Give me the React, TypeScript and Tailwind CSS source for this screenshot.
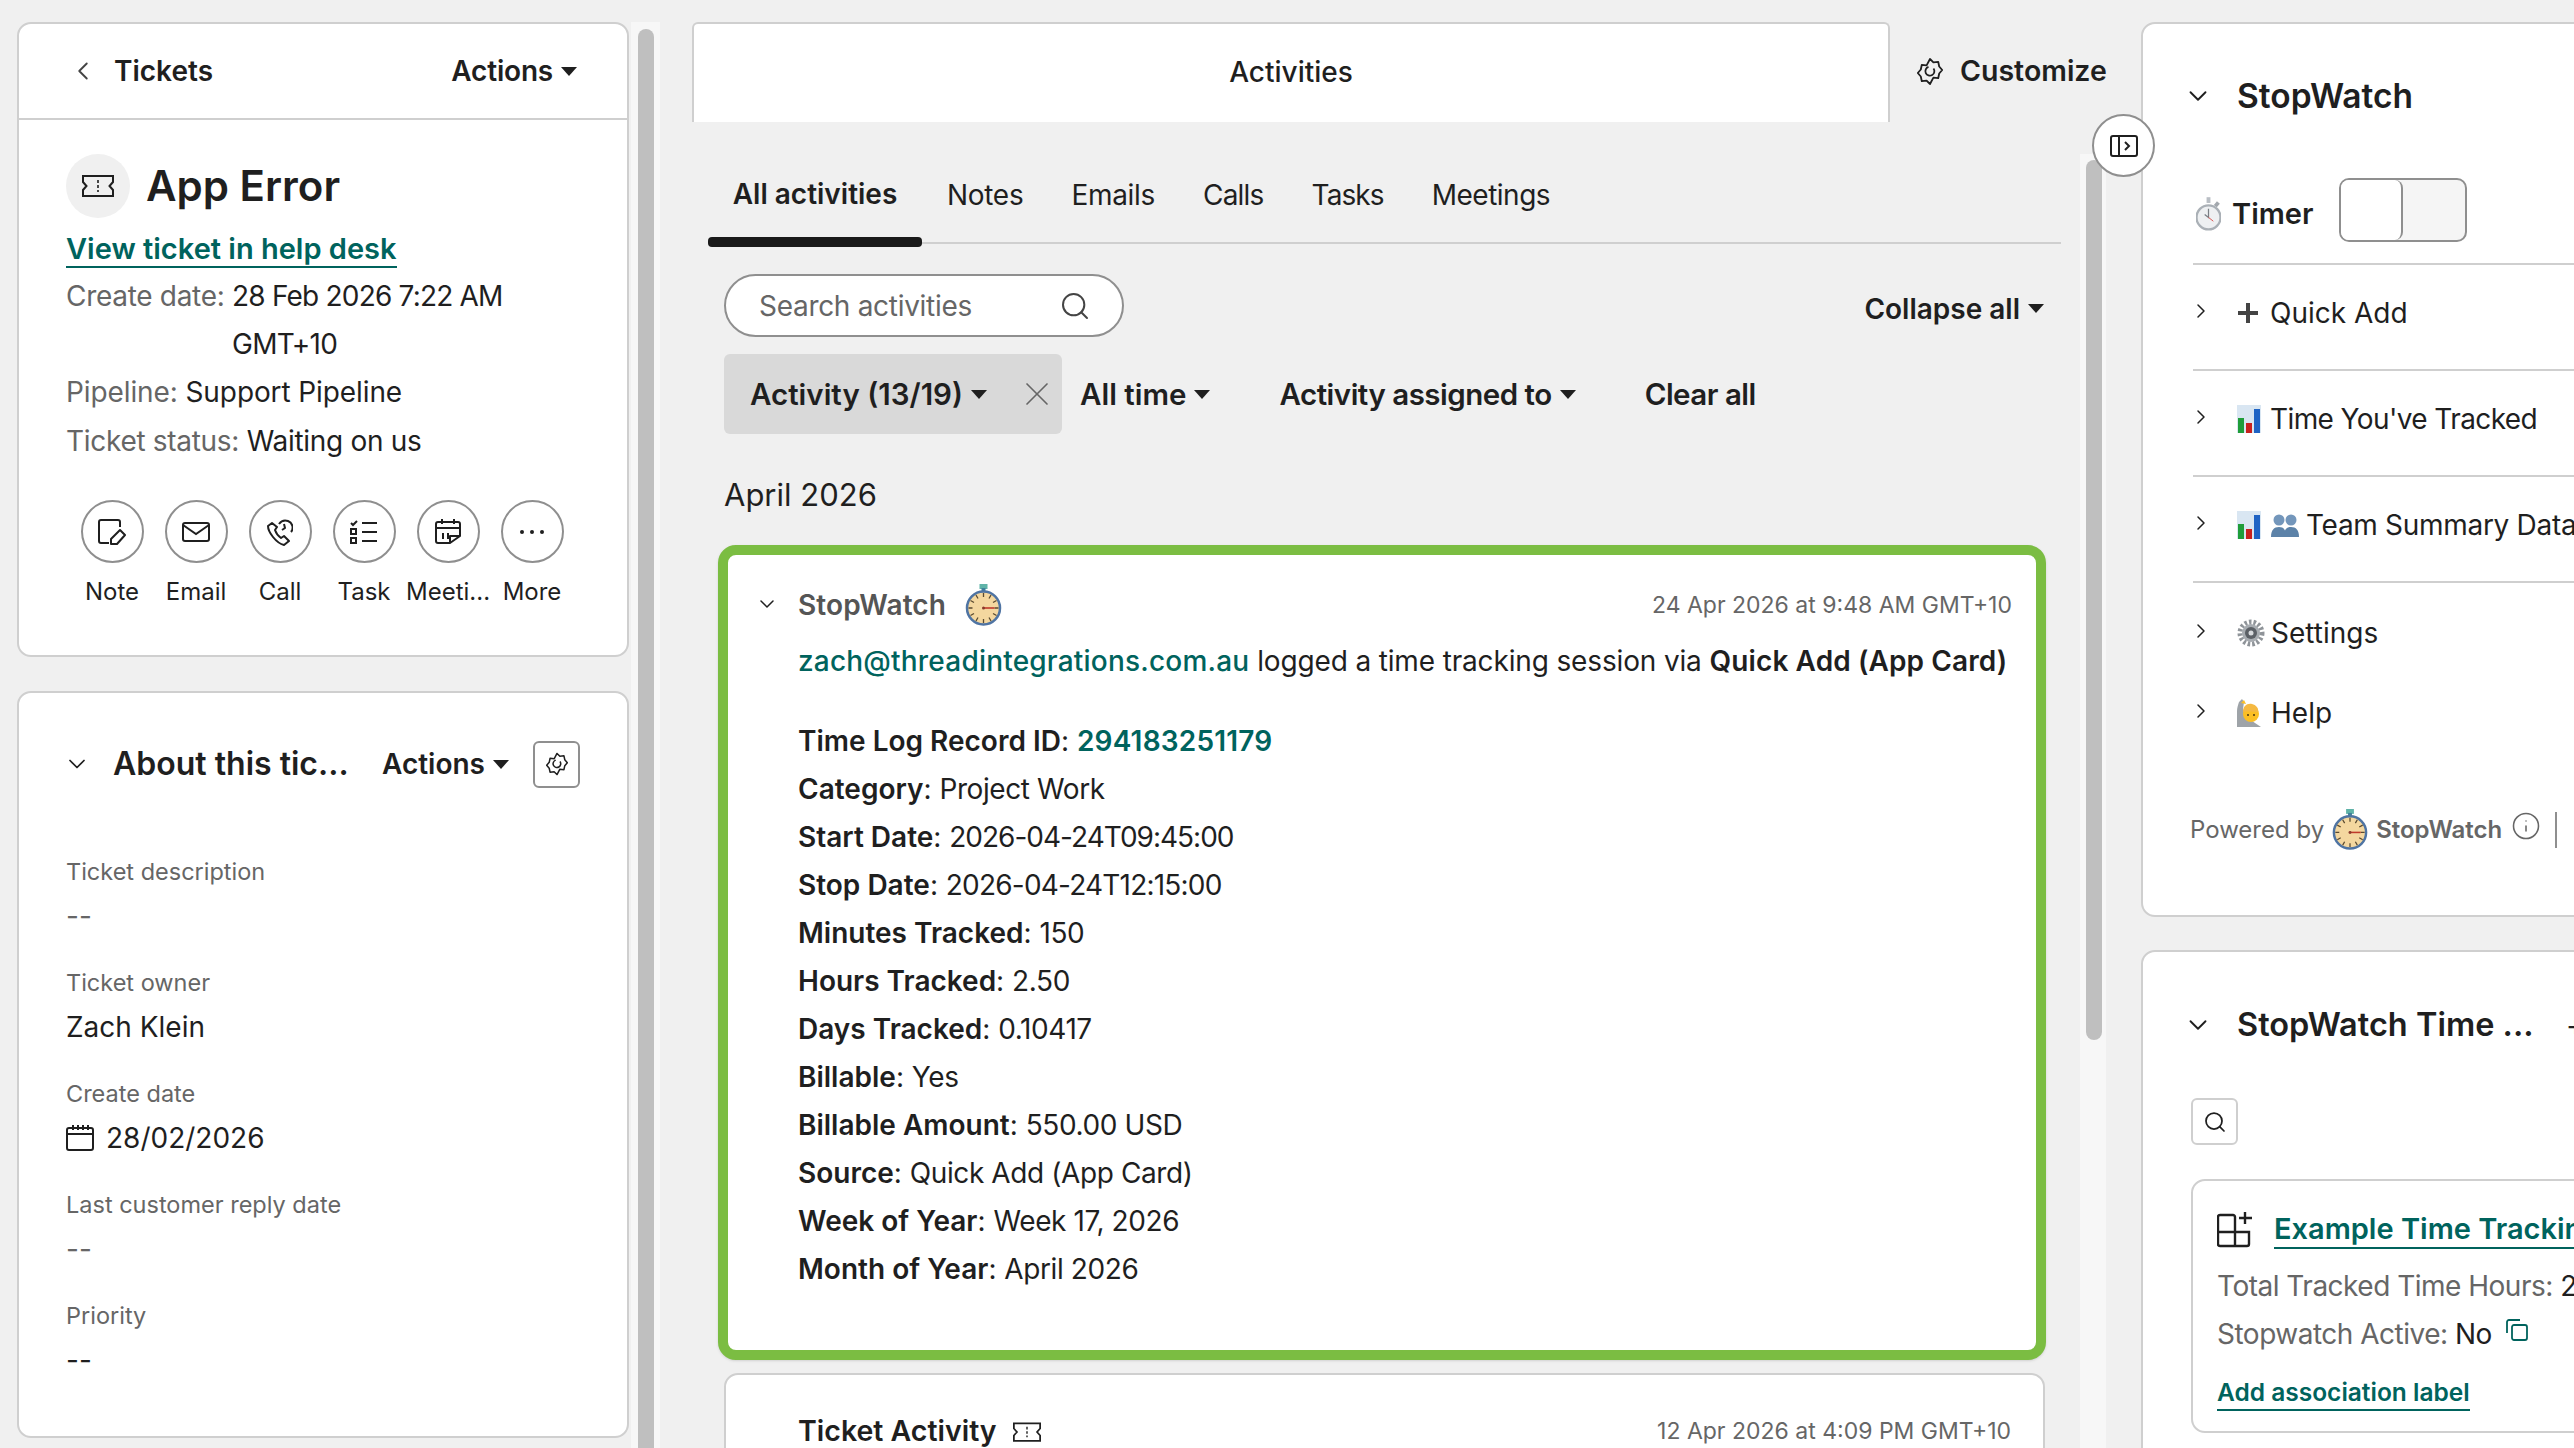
import { ChevronDown, ChevronLeft, ChevronRight, Search, X, Info } from 'lucide-react';

const Caret = () => (
  <svg viewBox="0 0 16 9" className="ml-[8px] h-[9px] w-[16px] shrink-0 fill-current">
    <path d="M0 0h16L8 9z" />
  </svg>
);

const TicketIcon = ({ className }: { className: string }) => (
  <svg viewBox="0 0 32 22" className={className} fill="none" stroke="currentColor" strokeWidth="2">
    <path d="M1 1h30v6l-3.5 4 3.500 4v6H1v-6l3.500-4L1 7z" />
    <path d="M16 5v3M16 10v3M16 15v2" strokeWidth="1.6" />
  </svg>
);

const GearIcon = ({ className }: { className: string }) => (
  <svg viewBox="0 0 26 28" className={className} fill="none" stroke="currentColor" strokeWidth="1.8" strokeLinejoin="round">
    <path d="M13 1.500l3.400 3.400 4.800-.6 1 4.700 3 3.500-3 3.500-1 4.700-4.800-.6L13 26.500l-3.400-3.400-4.800.6-1-4.700-3-3.500 3-3.500 1-4.700 4.800.6z" />
    <path d="M16.500 11a4.500 4.500 0 1 1-5-1.600" />
  </svg>
);

const StopwatchLogo = ({ className }: { className: string }) => (
  <svg viewBox="0 0 36 42" className={className}>
    <rect x="14" y="0" width="8" height="5" fill="#5fb3a8" />
    <rect x="16" y="4" width="4" height="4" fill="#3f7f9a" />
    <circle cx="18" cy="24" r="16.500" fill="#f4d79f" stroke="#4f74a3" strokeWidth="2.500" />
    <g stroke="#5a4a30" strokeWidth="1.300">
      <path d="M18 9v4M18 35v4M3 24h4M29 24h4M10.500 11l2 3.500M25.500 11l-2 3.500M10.500 37l2-3.500M25.500 37l-2-3.500M5 16.500l3.500 2M31 16.500l-3.500 2M5 31.500l3.500-2M31 31.500l-3.500-2" />
    </g>
    <path d="M18 24h11" stroke="#c0392b" strokeWidth="1.600" />
    <circle cx="18" cy="24" r="1.500" fill="#8a3a2b" />
  </svg>
);

const TimerEmoji = () => (
  <svg viewBox="0 0 26 36" className="h-[35px] w-[25px]">
    <rect x="11" y="0" width="4" height="6" fill="#b9bec4" />
    <rect x="20" y="5" width="4" height="5" fill="#a3a8ae" transform="rotate(40 22 7)" />
    <circle cx="13" cy="21" r="12.500" fill="#eef0f2" stroke="#aab0b6" strokeWidth="2.500" />
    <path d="M13 12v9l-4-3" stroke="#7a7f85" strokeWidth="1.300" fill="none" />
    <path d="M13 21l5 4" stroke="#d9534f" strokeWidth="1" />
  </svg>
);

const ChartEmoji = () => (
  <svg viewBox="0 0 24 28" className="h-[28px] w-[24px]">
    <rect width="24" height="28" fill="#d9e6f2" />
    <rect x="1" y="13" width="6" height="15" fill="#1f9d3a" />
    <rect x="9" y="18" width="6" height="10" fill="#c9211e" />
    <rect x="17" y="4" width="6" height="24" fill="#1f63c4" />
  </svg>
);

const PeopleEmoji = () => (
  <svg viewBox="0 0 28 24" className="h-[24px] w-[28px]">
    <circle cx="8" cy="7" r="5.500" fill="#7396bb" />
    <path d="M0 24c0-7 3-10 8-10s7 3 7 10z" fill="#5c82a8" />
    <circle cx="20" cy="7" r="5.500" fill="#7396bb" />
    <path d="M13 24c0-7 2-10 7-10s8 3 8 10z" fill="#5c82a8" />
  </svg>
);

const GearEmoji = () => (
  <svg viewBox="0 0 28 28" className="h-[28px] w-[28px]">
    <circle cx="14" cy="14" r="11" fill="none" stroke="#8f9499" strokeWidth="5" strokeDasharray="2.500 2" />
    <circle cx="14" cy="14" r="9" fill="#a7acb1" />
    <circle cx="14" cy="14" r="6" fill="#5b6066" />
    <circle cx="14" cy="14" r="2.500" fill="#d8dbde" />
  </svg>
);

const HelpEmoji = () => (
  <svg viewBox="0 0 24 28" className="h-[28px] w-[24px]">
    <path d="M0 28V12c0-3 1-6 2-9l3-3 2 3-1 7 4 8 8 6 6 4z" fill="#9ea3a8" />
    <circle cx="14" cy="15" r="8" fill="#fbbf24" />
    <path d="M6 13c0-6 4-9 9-8 4 1 7 4 6 8-4 0-10-1-15 0z" fill="#f5b942" />
    <path d="M4 4l3-3 2 4z" fill="#fbbf24" />
    <circle cx="11" cy="16" r="1" fill="#4a3410" />
    <circle cx="17" cy="16" r="1" fill="#4a3410" />
  </svg>
);

const IconButton = ({ label, children }: { label: string; children: React.ReactNode }) => (
  <div className="flex w-[84px] flex-col items-center">
    <div className="flex h-[63px] w-[63px] items-center justify-center rounded-full border-2 border-[#8f8f8f] text-[#1f1f1f]">
      {children}
    </div>
    <span className="mt-[15px] text-[24px] leading-[28px] text-[#1f1f1f]">{label}</span>
  </div>
);

const Field = ({ label, children, muted }: { label: string; children: React.ReactNode; muted?: boolean }) => (
  <div className="flex flex-col">
    <span className="h-[41px] text-[23.5px] leading-[28px] text-[#666666]">{label}</span>
    <div className={muted ? 'h-[70px] text-[28px] leading-[34px] text-[#666666]' : 'h-[70px] text-[28px] leading-[34px] text-[#1f1f1f]'}>{children}</div>
  </div>
);

const records: [string, string, string][] = [
  ['Category', 'Project Work', 'tracking-[-0.4px]'],
  ['Start Date', '2026-04-24T09:45:00', 'tracking-[-1px]'],
  ['Stop Date', '2026-04-24T12:15:00', 'tracking-[-0.8px]'],
  ['Minutes Tracked', '150', 'tracking-[-0.4px]'],
  ['Hours Tracked', '2.50', 'tracking-[-0.4px]'],
  ['Days Tracked', '0.10417', 'tracking-[-0.4px]'],
  ['Billable', 'Yes', 'tracking-[-0.4px]'],
  ['Billable Amount', '550.00 USD', 'tracking-[-0.4px]'],
  ['Source', 'Quick Add (App Card)', 'tracking-[-0.4px]'],
  ['Week of Year', 'Week 17, 2026', 'tracking-[-0.4px]'],
  ['Month of Year', 'April 2026', 'tracking-[-0.4px]'],
];

const AccordionRow = ({ children, line }: { children: React.ReactNode; line?: boolean }) => (
  <div className={line ? 'flex h-[106px] items-center border-b-2 border-[#cfcfcf] pb-[8px] pl-[3px]' : 'flex h-[80px] items-center pl-[3px]'}>
    <ChevronRight className="mr-[26px] h-[24px] w-[24px] -translate-x-[7px] -translate-y-[2px] shrink-0 text-[#1f1f1f]" strokeWidth={1.5} />
    <div className="-ml-[9px] flex items-center text-[28px] leading-[36px] whitespace-nowrap text-[#1f1f1f]">{children}</div>
  </div>
);

export default function App() {
  return (
    <div className="relative flex h-[1448px] w-[2574px] overflow-hidden bg-[#f0f0f0] font-[Inter,sans-serif] text-[#1f1f1f]">
      {/* left column */}
      <div className="flex w-[660px] shrink-0 pt-[22px] pl-[17px]">
        <div className="flex w-[612px] shrink-0 flex-col gap-[34px]">
          <div className="h-[635px] rounded-[14px] border-2 border-[#cfcfcf] bg-white">
            <div className="flex h-[96px] items-center justify-between border-b-2 border-[#cfcfcf] pr-[50px] pl-[50px]">
              <div className="flex items-center">
                <ChevronLeft className="-ml-[1px] h-[30px] w-[30px] text-[#444]" strokeWidth={1.5} />
                <span className="ml-[16px] text-[28px] font-semibold">Tickets</span>
              </div>
              <div className="flex items-center text-[28px] font-semibold tracking-[-0.2px]">
                Actions
                <Caret />
              </div>
            </div>
            <div className="px-[47px] pt-[34px]">
              <div className="flex items-center">
                <div className="flex h-[64px] w-[64px] items-center justify-center rounded-full bg-[#f0f0f0]">
                  <TicketIcon className="h-[22px] w-[32px]" />
                </div>
                <span className="ml-[16px] text-[42px] leading-[64px] font-semibold">App Error</span>
              </div>
              <div className="mt-[14px] w-fit border-b-2 border-[#00635d] text-[29px] leading-[34px] font-semibold text-[#00635d]">View ticket in help desk</div>
              <div className="mt-[4px] flex text-[28px] leading-[48px]">
                <span className="tracking-[-0.3px] whitespace-nowrap text-[#666666]">Create date:&nbsp;</span>
                <span className="w-[290px] tracking-[-0.8px]">28 Feb 2026 7:22 AM<br />GMT+10</span>
              </div>
              <div className="text-[28px] leading-[49px] tracking-[-0.1px]"><span className="text-[#666666]">Pipeline:</span> Support Pipeline</div>
              <div className="text-[28px] leading-[49px] tracking-[-0.3px]"><span className="text-[#666666]">Ticket status:</span> Waiting on us</div>
              <div className="mt-[34px] ml-[4px] flex">
                <IconButton label="Note">
                  <svg viewBox="0 0 28 26" className="h-[26px] w-[28px]" fill="none" stroke="currentColor" strokeWidth="2" strokeLinejoin="round">
                    <path d="M11 24H3a2 2 0 0 1-2-2V3a2 2 0 0 1 2-2h17a2 2 0 0 1 2 2v5" />
                    <path d="M13 20l9-9 5 5-8 9h-6z" />
                  </svg>
                </IconButton>
                <IconButton label="Email">
                  <svg viewBox="0 0 28 20" className="h-[20px] w-[28px]" fill="none" stroke="currentColor" strokeWidth="2">
                    <rect x="1" y="1" width="26" height="18" rx="2" />
                    <path d="M1 3l13 9 13-9" />
                  </svg>
                </IconButton>
                <IconButton label="Call">
                  <svg viewBox="0 0 26 28" className="h-[28px] w-[26px]" fill="none" stroke="currentColor" strokeWidth="2" strokeLinejoin="round">
                    <path d="M5 5l-4 3c0 6 8 17 16 19l5-4-5-5-3 2c-3-2-5-5-6-8l2-3z" />
                    <path d="M12 6a8 8 0 0 1 9-3 7 7 0 0 1 3 11M15 12l3-2-1-4" />
                  </svg>
                </IconButton>
                <IconButton label="Task">
                  <svg viewBox="0 0 28 24" className="h-[24px] w-[28px]" fill="none" stroke="currentColor" strokeWidth="2">
                    <path d="M1 3l2 2 4-4M12 3h15M12 12h15M12 21h15" />
                    <rect x="1" y="9" width="5" height="5" />
                    <rect x="1" y="18" width="5" height="5" />
                  </svg>
                </IconButton>
                <IconButton label="Meeti...">
                  <svg viewBox="0 0 26 26" className="h-[26px] w-[26px]" fill="none" stroke="currentColor" strokeWidth="2" strokeLinejoin="round">
                    <path d="M15 24H3a2 2 0 0 1-2-2V5a2 2 0 0 1 2-2h20a2 2 0 0 1 2 2v12z" />
                    <path d="M1 9h24M7 0v5M19 0v5M8 14v6M13 14v6M15 24v-7h10" />
                  </svg>
                </IconButton>
                <IconButton label="More">
                  <svg viewBox="0 0 24 4" className="h-[4px] w-[24px] fill-current">
                    <circle cx="2" cy="2" r="2" />
                    <circle cx="12" cy="2" r="2" />
                    <circle cx="22" cy="2" r="2" />
                  </svg>
                </IconButton>
              </div>
            </div>
          </div>
          <div className="h-[747px] rounded-[14px] border-2 border-[#cfcfcf] bg-white px-[47px]">
            <div className="flex h-[142px] items-center">
              <ChevronDown className="-ml-[3px] h-[28px] w-[28px]" strokeWidth={1.5} />
              <span className="ml-[22px] w-[236px] text-[32px] font-semibold whitespace-nowrap">About this tic...</span>
              <span className="ml-[33px] flex items-center text-[28px] font-semibold">Actions<Caret /></span>
              <div className="ml-[24px] flex h-[47px] w-[47px] items-center justify-center rounded-[6px] border-2 border-[#8f8f8f]">
                <GearIcon className="h-[24px] w-[22px]" />
              </div>
            </div>
            <div className="mt-[23px]">
              <Field label="Ticket description" muted>--</Field>
              <Field label="Ticket owner">Zach Klein</Field>
              <Field label="Create date">
                <div className="flex items-center">
                  <svg viewBox="0 0 28 26" className="mr-[12px] h-[26px] w-[28px]" fill="none" stroke="currentColor" strokeWidth="2">
                    <rect x="1" y="3" width="26" height="22" rx="2" />
                    <path d="M1 9h26M7 0v5M12 0v5M17 0v5M22 0v5" />
                  </svg>
                  28/02/2026
                </div>
              </Field>
              <Field label="Last customer reply date" muted>--</Field>
              <Field label="Priority">--</Field>
            </div>
          </div>
        </div>
        <div className="ml-[2px] w-[29px] shrink-0 bg-[#f7f7f7] pt-[7px] pl-[7px]">
          <div className="h-[1500px] w-[16px] rounded-t-full bg-[#bfbfbf]" />
        </div>
      </div>

      {/* activities column */}
      <div className="flex w-[1481px] shrink-0 flex-col pl-[32px]">
        <div className="flex h-[122px] shrink-0 pt-[22px]">
          <div className="flex w-[1198px] items-center justify-center rounded-t-[6px] border-x-2 border-t-2 border-[#cfcfcf] bg-white pb-[2px] text-[28px] font-medium">Activities</div>
          <div className="ml-[27px] flex items-center pb-[2px] text-[28.500px] font-semibold">
            <GearIcon className="h-[29px] w-[26px]" />
            <span className="ml-[17px]">Customize</span>
          </div>
        </div>
        <div className="flex min-h-0 flex-1">
          <div className="w-[1388px] shrink-0">
            <div className="ml-[16px] flex h-[122px] w-[1353px] items-end border-b-2 border-[#cfcfcf] text-[28px] leading-[36px]">
              <div className="-mb-[5px] flex h-[125px] w-[214px] flex-col items-center justify-between">
                <span className="mt-[54px] font-semibold">All activities</span>
                <div className="h-[10px] w-full rounded-[4px] bg-[#1a1a1a]" />
              </div>
              <div className="flex h-full gap-[48px] pt-[55px] pl-[25px] tracking-[-0.3px]">
                <span>Notes</span>
                <span>Emails</span>
                <span className="tracking-[-0.8px]">Calls</span>
                <span className="tracking-[-0.9px]">Tasks</span>
                <span className="tracking-[-0.5px]">Meetings</span>
              </div>
            </div>
            <div className="px-[32px]">
              <div className="mt-[30px] flex h-[63px] items-center justify-between">
                <div className="flex h-[63px] w-[400px] items-center justify-between rounded-full border-2 border-[#8f8f8f] bg-white pr-[31px] pl-[33px] text-[28px] tracking-[-0.3px] text-[#666666]">
                  Search activities
                  <Search className="h-[32px] w-[32px] text-[#444]" strokeWidth={1.5} />
                </div>
                <div className="flex items-center pt-[6px] pr-[4px] text-[28px] font-semibold">Collapse all<Caret /></div>
              </div>
              <div className="mt-[17px] flex h-[80px] items-center text-[29.500px] font-semibold whitespace-nowrap">
                <div className="flex h-[80px] w-[338px] items-center rounded-[6px] bg-[#d9d9d9] pr-[5px] pl-[26px]">
                  Activity (13/19)<Caret />
                  <X className="ml-auto h-[40px] w-[40px] text-[#666666]" strokeWidth={1} />
                </div>
                <div className="ml-[18px] flex items-center">All time<Caret /></div>
                <div className="ml-[69px] flex items-center tracking-[-0.5px]">Activity assigned to<Caret /></div>
                <div className="ml-[69px] tracking-[-0.5px]">Clear all</div>
              </div>
              <div className="mt-[40px] text-[31px] leading-[42px]">April 2026</div>
              <div className="mt-[29px] -ml-[6px] h-[815px] w-[1328px] rounded-[18px] border-[10px] border-[#7bbd42] bg-white pr-[24px] pl-[34px] shadow-sm">
                <div className="mt-[14px] flex h-[72px] items-center">
                  <ChevronDown className="mr-[19px] -ml-[7px] h-[24px] w-[24px] -translate-y-[1px] shrink-0" strokeWidth={1.5} />
                  <span className="text-[28px] font-semibold tracking-[0.1px] text-[#555555]">StopWatch</span>
                  <StopwatchLogo className="ml-[19px] h-[42px] w-[37px]" />
                  <span className="ml-auto text-[23px] text-[#666666]">24 Apr 2026 at 9:48 AM GMT+10</span>
                </div>
                <div className="-mt-[4px] pl-[36px]">
                  <div className="text-[28px] leading-[48px] whitespace-nowrap">
                    <span className="font-medium tracking-[0.2px] text-[#00635d]">zach@threadintegrations.com.au</span> <span className="tracking-[-0.15px]">logged a time tracking session via</span> <span className="font-semibold tracking-[0.1px]">Quick Add (App Card)</span>
                  </div>
                  <div className="mt-[32px] text-[28px] leading-[48px]">
                    <div><span className="font-semibold">Time Log Record ID</span>: <span className="font-semibold tracking-[0.2px] text-[#00635d]">294183251179</span></div>
                    {records.map(([k, v, t]) => (
                      <div key={k}><span className="font-semibold">{k}</span>: <span className={t}>{v}</span></div>
                    ))}
                  </div>
                </div>
              </div>
              <div className="mt-[13px] h-[200px] w-[1321px] rounded-[14px] border-2 border-[#cfcfcf] bg-white pr-[32px] pl-[72px]">
                <div className="flex h-[113px] items-center text-[28.500px] font-semibold">
                  Ticket Activity
                  <TicketIcon className="ml-[16px] h-[20px] w-[28px]" />
                  <span className="ml-auto text-[23px] font-normal text-[#666666]">12 Apr 2026 at 4:09 PM GMT+10</span>
                </div>
              </div>
            </div>
          </div>
          <div className="mt-[32px] w-[26px] shrink-0 bg-[#f7f7f7] pt-[6px] pl-[6px]">
            <div className="h-[880px] w-[16px] rounded-full bg-[#bfbfbf]" />
          </div>
        </div>
      </div>

      {/* collapse toggle */}
      <div className="absolute top-[114px] left-[2092px] flex h-[63px] w-[63px] items-center justify-center rounded-full border-2 border-[#8f8f8f] bg-white">
        <svg viewBox="0 0 28 22" className="h-[22px] w-[28px]" fill="none" stroke="currentColor" strokeWidth="2">
          <rect x="1" y="1" width="26" height="20" rx="2" />
          <path d="M9 1v20M15 7l4 4-4 4" />
        </svg>
      </div>

      {/* right column */}
      <div className="flex w-[433px] shrink-0 flex-col gap-[33px] pt-[22px]">
        <div className="h-[895px] w-[520px] shrink-0 rounded-[14px] border-2 border-[#cfcfcf] bg-white pl-[50px]">
          <div className="flex h-[146px] items-center pb-[2px]">
            <ChevronDown className="-ml-[10px] h-[30px] w-[30px]" strokeWidth={1.5} />
            <span className="ml-[24px] text-[33.500px] font-semibold">StopWatch</span>
          </div>
          <div className="flex h-[95px] items-start border-b-2 border-[#cfcfcf]">
            <div className="mt-[12px] flex h-[64px] items-center pl-[3px]">
              <TimerEmoji />
              <span className="ml-[11px] text-[29px] font-semibold">Timer</span>
            </div>
            <div className="mt-[8px] ml-[25px] flex h-[64px] w-[128px] rounded-[10px] border-2 border-[#8f8f8f] bg-[#f5f5f5]">
              <div className="h-full w-[62px] rounded-[8px] border-r-2 border-[#8f8f8f] bg-white" />
            </div>
          </div>
          <AccordionRow line>
            <svg viewBox="0 0 20 20" className="mr-[12px] ml-[1px] h-[20px] w-[20px] fill-[#444]"><path d="M8 0h4v8h8v4h-8v8H8v-8H0V8h8z" /></svg>
            Quick Add
          </AccordionRow>
          <AccordionRow line>
            <ChartEmoji /><span className="ml-[9px] tracking-[-0.6px]">Time You&apos;ve Tracked</span>
          </AccordionRow>
          <AccordionRow line>
            <ChartEmoji /><span className="ml-[10px]"><PeopleEmoji /></span><span className="ml-[7px] tracking-[-0.3px]">Team Summary Data</span>
          </AccordionRow>
          <div className="h-[10px]" />
          <AccordionRow><GearEmoji /><span className="ml-[6px]">Settings</span></AccordionRow>
          <AccordionRow><HelpEmoji /><span className="ml-[10px]">Help</span></AccordionRow>
          <div className="mt-[56px] -ml-[3px] flex items-center text-[24px] whitespace-nowrap text-[#666666]">
            Powered by
            <StopwatchLogo className="ml-[8px] h-[41px] w-[36px]" />
            <span className="ml-[8px] font-semibold">StopWatch</span>
            <Info className="mb-[8px] ml-[9px] h-[30px] w-[30px]" strokeWidth={1.25} />
            <div className="ml-[14px] h-[36px] w-[2px] bg-[#8f8f8f]" />
          </div>
        </div>
        <div className="h-[700px] w-[520px] shrink-0 rounded-[14px] border-2 border-[#cfcfcf] bg-white pr-[24px] pl-[48px]">
          <div className="flex h-[146px] items-center">
            <ChevronDown className="-ml-[8px] h-[30px] w-[30px]" strokeWidth={1.5} />
            <span className="ml-[24px] text-[32.500px] font-semibold whitespace-nowrap">StopWatch Time ...</span>
            <span className="ml-[32px] text-[30px]">+</span>
          </div>
          <div className="flex h-[47px] w-[47px] items-center justify-center rounded-[6px] border-2 border-[#cfcfcf]">
            <Search className="h-[24px] w-[24px]" strokeWidth={1.75} />
          </div>
          <div className="mt-[34px] h-[254px] w-[500px] rounded-[14px] border-2 border-[#cfcfcf] pt-[31px] pl-[24px]">
            <div className="flex h-[36px] items-center">
              <svg viewBox="0 0 36 36" className="h-[36px] w-[36px]" fill="none" stroke="currentColor" strokeWidth="2.400">
                <path d="M18 9V5a2 2 0 0 0-2-2H3a2 2 0 0 0-2 2v27a2 2 0 0 0 2 2h27a2 2 0 0 0 2-2V20H1M18 9v25M18 9v11M28 0v12M22 6h13" />
              </svg>
              <span className="ml-[21px] border-b-2 border-[#00635d] text-[29px] leading-[36px] font-semibold whitespace-nowrap text-[#00635d]">Example Time Tracking</span>
            </div>
            <div className="mt-[14px] text-[28px] leading-[48px] tracking-[-0.5px] whitespace-nowrap"><span className="text-[#666666]">Total Tracked Time Hours:</span> 2.50</div>
            <div className="flex items-center text-[28px] leading-[48px] tracking-[-0.5px]">
              <span className="text-[#666666]">Stopwatch Active:</span>&nbsp;No
              <svg viewBox="0 0 22 22" className="mb-[8px] ml-[14px] h-[22px] w-[22px]" fill="none" stroke="#00635d" strokeWidth="1.800">
                <rect x="6" y="6" width="15" height="15" rx="2" />
                <path d="M1 14V3a2 2 0 0 1 2-2h11" />
              </svg>
            </div>
            <div className="mt-[17px] w-fit border-b-2 border-[#00635d] text-[24.500px] leading-[34px] font-semibold text-[#00635d]">Add association label</div>
          </div>
        </div>
      </div>
    </div>
  );
}
